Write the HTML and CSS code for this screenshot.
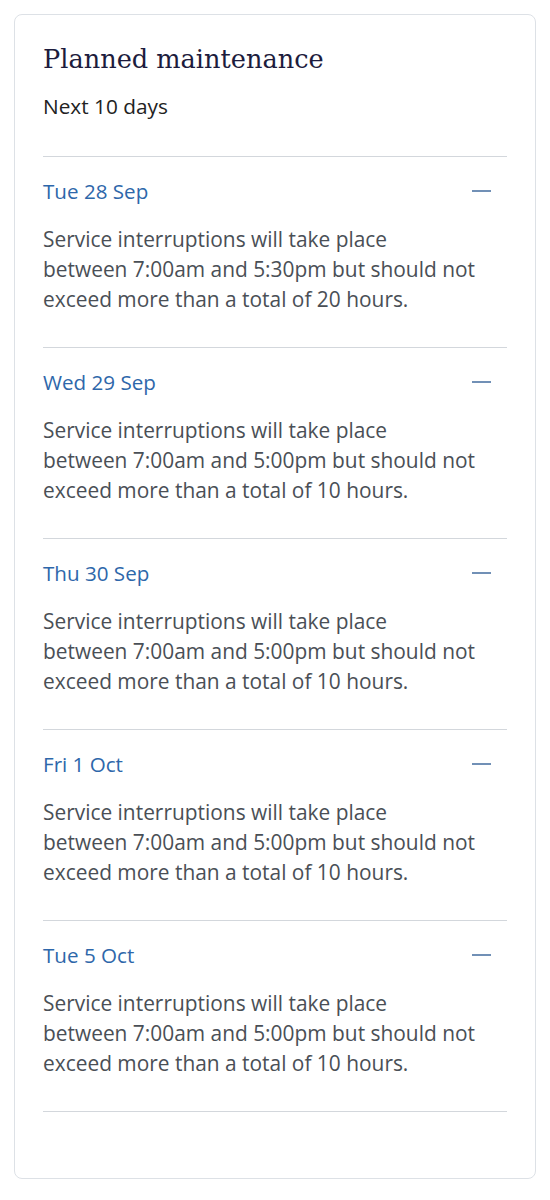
FILE: index.html
```html
<!DOCTYPE html>
<html lang="en">
<head>
  <meta charset="utf-8">
  <title>Planned maintenance</title>
  <link rel="stylesheet" href="styles.css">
</head>
<body>
  <div class="card">
    <h2>Planned maintenance</h2>
    <p class="subtitle">Next 10 days</p>

    <ul class="days">
      <li class="day">
        <div class="day-head">
          <span class="date">Tue 28 Sep</span>
          <span class="toggle"></span>
        </div>
        <p class="note">Service interruptions will take place<br>between 7:00am and 5:30pm but should not<br>exceed more than a total of 20 hours.</p>
      </li>
      <li class="day">
        <div class="day-head">
          <span class="date">Wed 29 Sep</span>
          <span class="toggle"></span>
        </div>
        <p class="note">Service interruptions will take place<br>between 7:00am and 5:00pm but should not<br>exceed more than a total of 10 hours.</p>
      </li>
      <li class="day">
        <div class="day-head">
          <span class="date">Thu 30 Sep</span>
          <span class="toggle"></span>
        </div>
        <p class="note">Service interruptions will take place<br>between 7:00am and 5:00pm but should not<br>exceed more than a total of 10 hours.</p>
      </li>
      <li class="day">
        <div class="day-head">
          <span class="date">Fri 1 Oct</span>
          <span class="toggle"></span>
        </div>
        <p class="note">Service interruptions will take place<br>between 7:00am and 5:00pm but should not<br>exceed more than a total of 10 hours.</p>
      </li>
      <li class="day">
        <div class="day-head">
          <span class="date">Tue 5 Oct</span>
          <span class="toggle"></span>
        </div>
        <p class="note">Service interruptions will take place<br>between 7:00am and 5:00pm but should not<br>exceed more than a total of 10 hours.</p>
      </li>
    </ul>
  </div>
</body>
</html>
```

FILE: styles.css
```css
body {
  margin: 14px;
  background-color: #fff;
  font-family: "Open Sans", Arial, sans-serif;
}
.card {
  border: 1px solid #dde1e6;
  border-radius: 8px;
  padding: 26px 28px 66px;
  background-color: #fff;
}
h2 {
  margin: 0;
  font-family: "DejaVu Serif", "Liberation Serif", serif;
  font-weight: normal;
  font-size: 25.6px;
  line-height: 36px;
  color: #1d1c3d;
}
.subtitle {
  margin: 14px 0 0;
  font-size: 20.8px;
  line-height: 30px;
  color: #222;
}
.days {
  list-style: none;
  margin: 35px 0 0;
  padding: 0;
  border-top: 1px solid #d3d7dc;
}
.day {
  padding: 19px 0 33px;
  border-bottom: 1px solid #d3d7dc;
}
.day-head {
  display: flex;
  justify-content: space-between;
  align-items: center;
}
.date {
  font-size: 20.6px;
  line-height: 30px;
  color: #2e67aa;
}
.toggle {
  width: 19px;
  height: 2px;
  margin-right: 16px;
  background-color: #7190b6;
}
.note {
  margin: 18px 0 0;
  font-size: 20.9px;
  line-height: 30px;
  color: #4a4f56;
}
```
